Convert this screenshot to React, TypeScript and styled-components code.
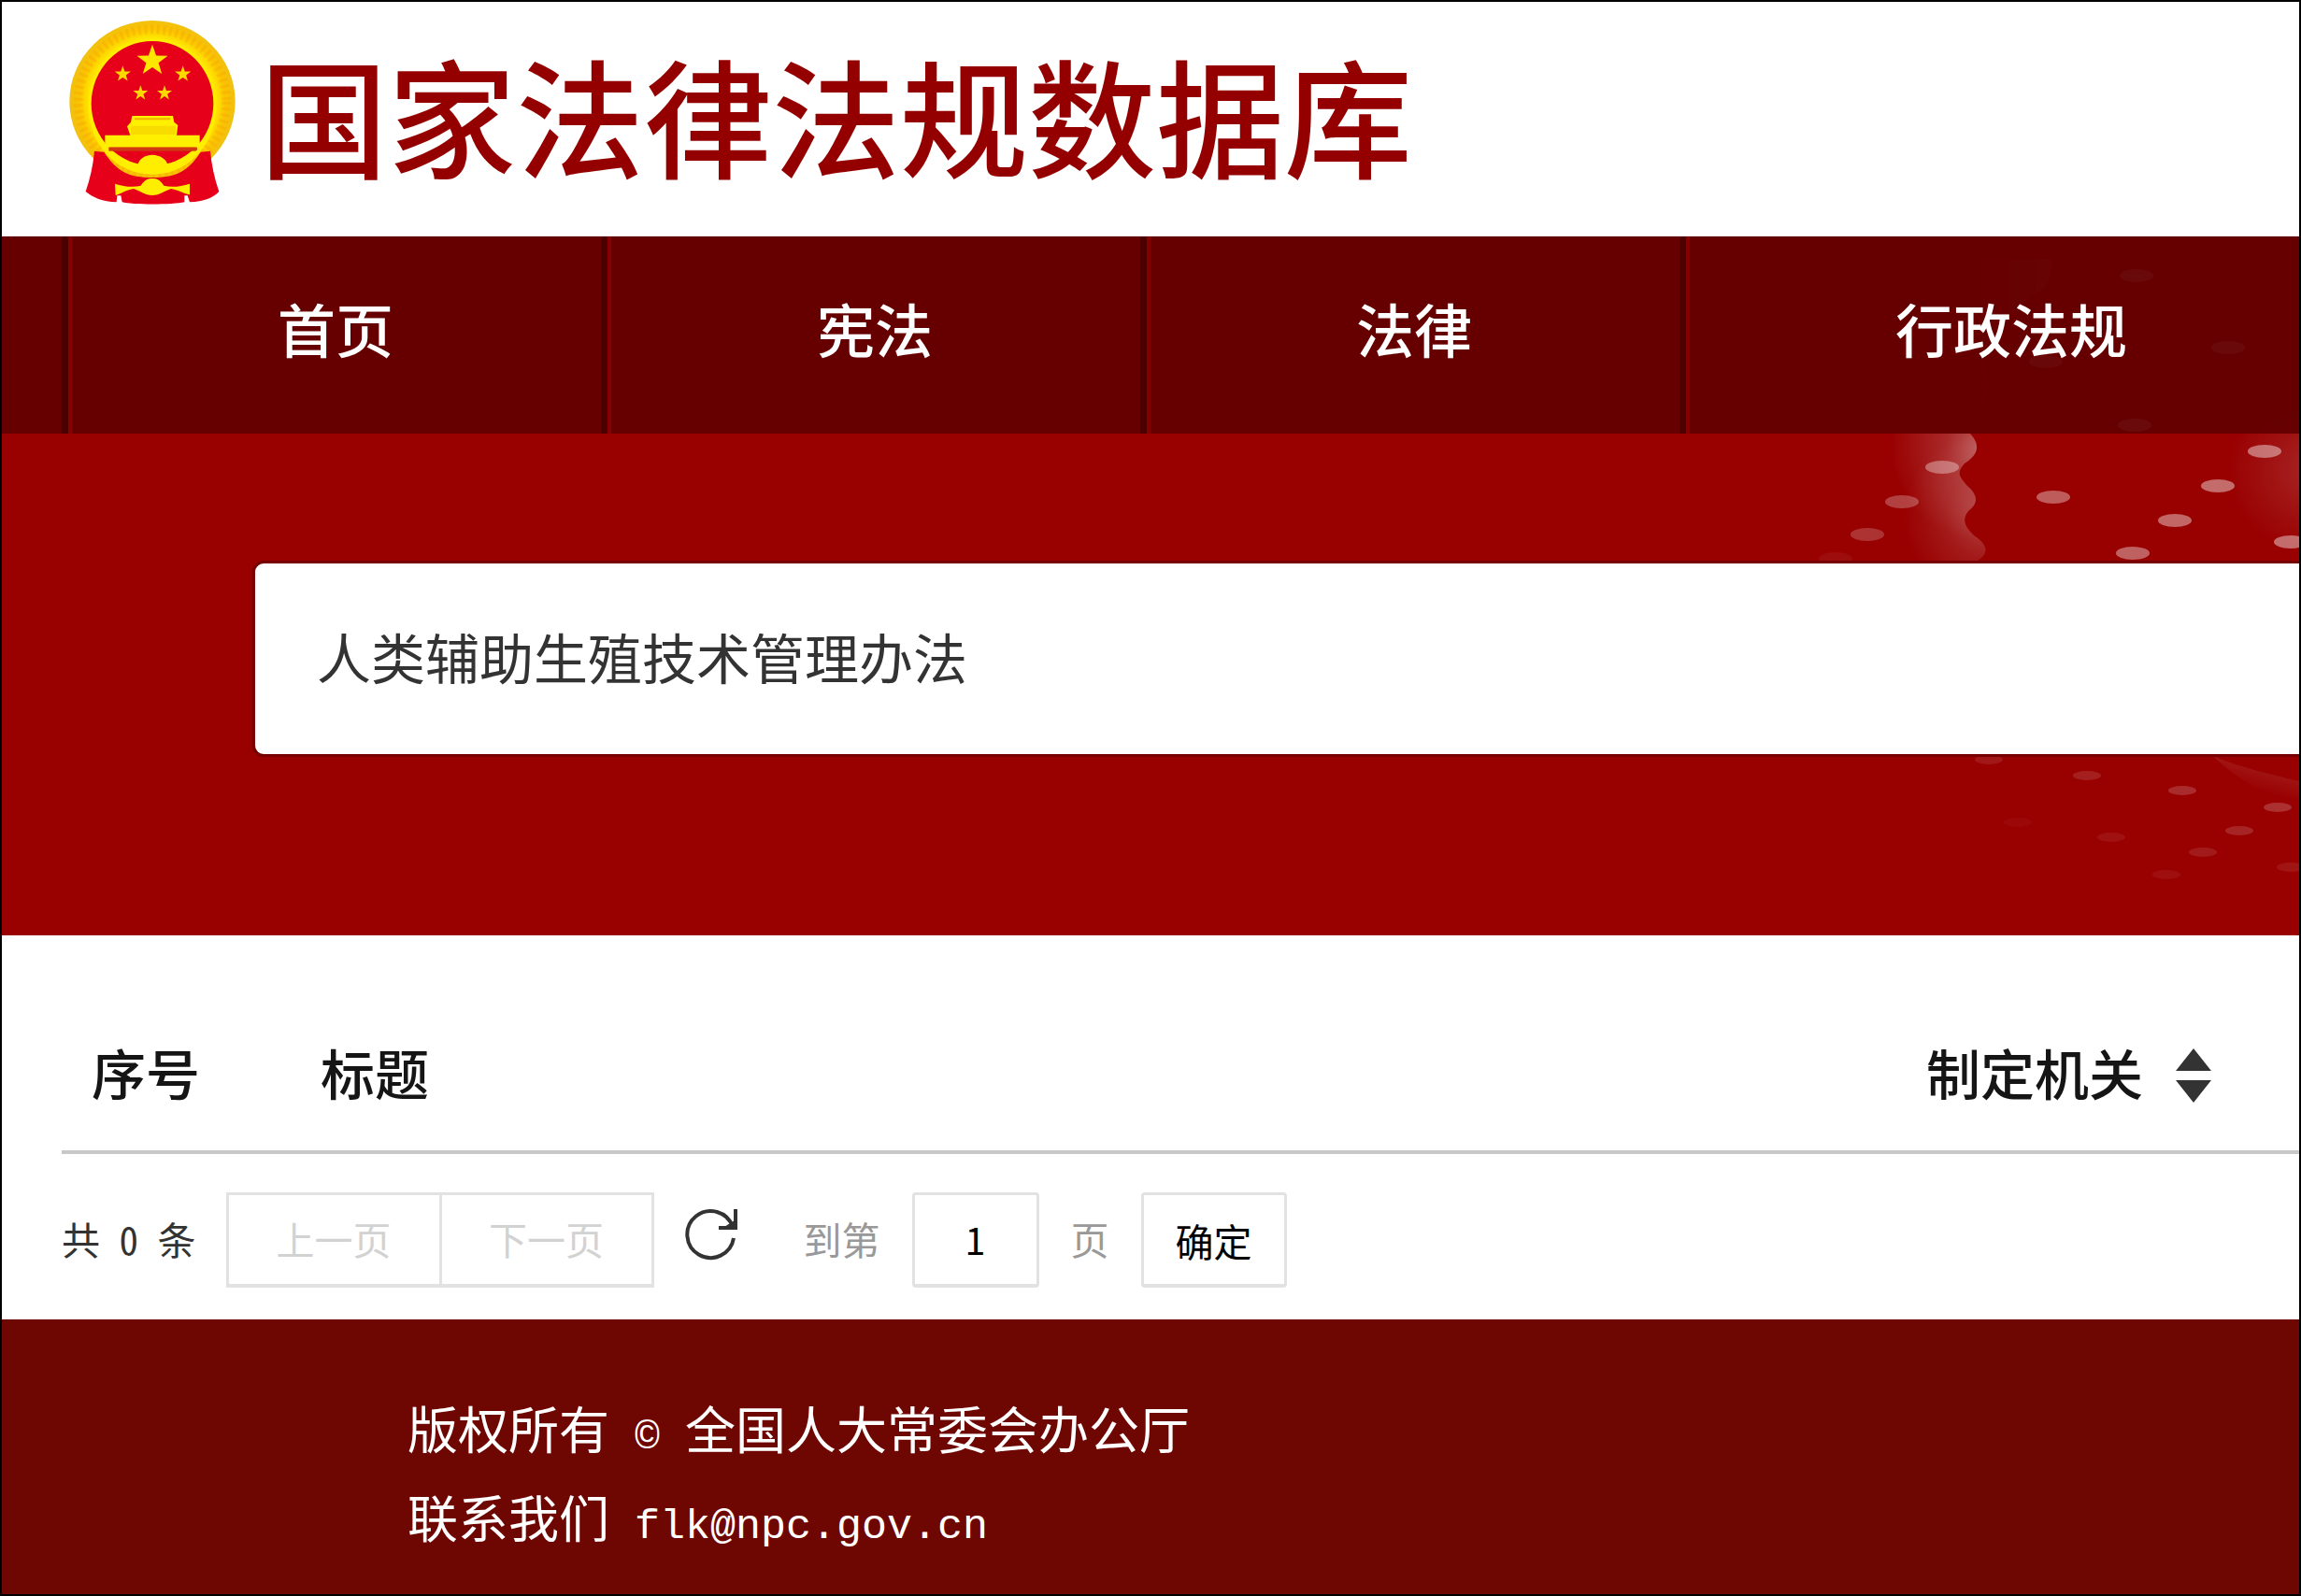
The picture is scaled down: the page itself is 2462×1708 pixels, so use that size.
import React, { useState } from "react";
import styled, { createGlobalStyle } from "styled-components";

const sans = `"Noto Sans CJK SC", "Liberation Sans", sans-serif`;
const mono = `"Noto Sans Mono CJK SC", "Noto Sans CJK SC", monospace`;

const GlobalStyle = createGlobalStyle`
  *, *::before, *::after { box-sizing: border-box; }
  body { margin: 0; background: #fff; font-family: ${sans}; color: #333; }
  button, input { font: inherit; margin: 0; }
  a { color: inherit; text-decoration: none; }
`;

const Page = styled.div`
  border: 2px solid #000;
  overflow: hidden;
`;

const Header = styled.header`
  display: flex;
  align-items: center;
  gap: 26px;
  padding: 20px 0 34px 72px;
  background: #fff;
`;

const EmblemSvg = styled.svg`
  flex: none;
  width: 178px;
  height: 197px;
`;

const SiteName = styled.h1`
  margin: 0;
  font-size: 137px;
  line-height: 160px;
  font-weight: 500;
  color: #940000;
  white-space: nowrap;
`;

const Hero = styled.div`
  position: relative;
  background: #990000;
`;

const HeroArt = styled.svg`
  position: absolute;
  top: 0;
  right: 0;
  width: 698px;
  height: 748px;
`;

const Nav = styled.nav`
  position: relative;
  display: flex;
  padding-left: 64px;
  background: rgba(96, 0, 0, 0.9);
`;

const NavLink = styled.a`
  display: flex;
  flex: none;
  align-items: center;
  height: 211px;
  padding: 0 222px 16px 224px;
  border-left: 7px solid #4d0000;
  box-shadow: inset 4px 0 #850000;
  font-size: 62px;
  line-height: 80px;
  font-weight: 500;
  color: #fff;
  white-space: nowrap;
`;

const SearchBar = styled.form`
  position: relative;
  display: flex;
  padding: 136px 0 191px 268px;
`;

const SearchInput = styled.input`
  flex: 1;
  min-width: 0;
  height: 210px;
  padding: 0 66px 6px;
  border: 3px solid #760000;
  border-right: 0;
  border-radius: 12px 0 0 12px;
  background: #fff;
  color: #333;
  font-size: 58px;
  outline: none;
`;

const Results = styled.main`
  padding: 68px 0 34px 64px;
  background: #fff;
`;

const Table = styled.table`
  width: 100%;
  table-layout: fixed;
  border-collapse: collapse;
`;

const Th = styled.th<{ $width?: number }>`
  width: ${(p) => (p.$width ? `${p.$width}px` : "auto")};
  padding: 38px 0 44px 32px;
  border-bottom: 4px solid #c8c8c8;
  font-size: 58px;
  line-height: 80px;
  font-weight: 500;
  color: #151515;
  text-align: left;
  white-space: nowrap;
`;

const SortButton = styled.button`
  display: flex;
  align-items: center;
  gap: 35px;
  padding: 0;
  border: 0;
  background: none;
  color: inherit;
  line-height: 80px;
`;

const SortSvg = styled.svg`
  margin-top: 8px;
`;

const Pager = styled.div`
  display: flex;
  align-items: center;
  gap: 32px;
  padding-top: 41px;
  font-size: 41px;
  line-height: 60px;
  white-space: nowrap;
`;

const Total = styled.span`
  padding-bottom: 4px;
  font-family: ${mono};
`;

const StepGroup = styled.div`
  display: flex;
`;

const StepButton = styled.button`
  width: 231px;
  height: 102px;
  padding: 0 0 4px;
  border: 3px solid #e2e2e2;
  border-bottom-width: 4px;
  background: #fff;
  color: #d2d2d2;

  & + & {
    width: 230px;
    margin-left: -3px;
  }
`;

const RefreshButton = styled.button`
  display: flex;
  padding: 0 0 12px;
  margin-right: 38px;
  border: 0;
  background: none;
`;

const JumpForm = styled.form`
  display: flex;
  align-items: center;
  gap: 34px;
  color: #999;
`;

const JumpLabel = styled.label`
  padding-bottom: 4px;
`;

const PageInput = styled.input`
  width: 136px;
  height: 102px;
  padding: 0 0 4px;
  border: 3px solid #e2e2e2;
  border-bottom-width: 4px;
  border-radius: 4px;
  background: #fff;
  color: #000;
  font-family: ${mono};
  text-align: center;
`;

const ConfirmButton = styled.button`
  width: 156px;
  height: 102px;
  padding: 0;
  border: 3px solid #e2e2e2;
  border-bottom-width: 4px;
  border-radius: 4px;
  background: #fff;
  color: #000;
`;

const Footer = styled.footer`
  padding: 68px 0 36px 434px;
  background: #6e0602;
  color: #fff;
  font-family: ${mono};
  font-size: 54px;
  font-weight: 300;
  line-height: 95px;
`;

const FooterLine = styled.p`
  height: 95px;
  margin: 0;
  white-space: pre;
`;

const Latin = styled.span`
  font-family: "Liberation Mono", monospace;
  font-size: 45px;
`;

function star(cx: number, cy: number, r: number) {
  return Array.from({ length: 10 }, (_, i) => {
    const radius = i % 2 ? r * 0.4 : r;
    const a = -Math.PI / 2 + (i * Math.PI) / 5;
    return `${(cx + radius * Math.cos(a)).toFixed(1)},${(cy + radius * Math.sin(a)).toFixed(1)}`;
  }).join(" ");
}

function Emblem() {
  return (
    <EmblemSvg viewBox="38 36 534 591" role="img" aria-label="国徽">
      <defs>
        <radialGradient id="wreath" gradientUnits="userSpaceOnUse" cx="305" cy="296" r="266">
          <stop offset="0.76" stopColor="#ffe800" />
          <stop offset="0.88" stopColor="#fbc400" />
          <stop offset="1" stopColor="#f0c012" />
        </radialGradient>
      </defs>
      <ellipse cx="305" cy="296" rx="266" ry="260" fill="url(#wreath)" />
      <ellipse cx="305" cy="296" rx="238" ry="232" fill="none" stroke="#f5a000" strokeWidth="30" strokeDasharray="9 11" opacity="0.35" />
      <path d="M119 455 L150 458 C190 520 230 540 305 540 C380 540 420 520 460 458 L491 455 C495 500 505 545 519 585 C500 605 470 618 425 619 L418 598 L408 598 L408 619 C370 628 240 628 208 619 L204 598 L192 598 L190 619 C145 617 115 605 91 585 C105 545 115 500 119 455 Z" fill="#e60019" />
      <ellipse cx="305" cy="312" rx="205" ry="218" fill="#ffee00" />
      <ellipse cx="305" cy="302" rx="196" ry="200" fill="#e60019" />
      <polygon points={star(305, 165, 52)} fill="#ffe600" />
      <polygon points={star(210, 208, 27)} fill="#ffd800" />
      <polygon points={star(403, 208, 27)} fill="#ffd800" />
      <polygon points={star(267, 269, 25)} fill="#ffd800" />
      <polygon points={star(344, 269, 25)} fill="#ffd800" />
      <path d="M240 342 H371 L375 362 L387 372 L383 404 H457 V443 H153 V404 H234 L224 376 L236 362 Z" fill="#fff000" />
      <path d="M248 352 H363" stroke="#f0b000" strokeWidth="6" fill="none" />
      <path d="M234 374 H380 V402 H238 Z" fill="#f8dc00" />
      <rect x="165" y="443" width="284" height="12" fill="#cf3a10" />
      <path d="M140 430 C170 500 240 528 305 520 C370 528 440 500 470 430 L440 460 C410 492 380 502 355 500 C350 480 330 468 305 467 C280 468 262 480 258 500 C230 502 195 490 165 455 Z" fill="#ffee00" />
      <path d="M185 560 C215 570 245 572 268 566 C280 548 290 543 305 543 C320 543 330 548 342 566 C365 572 395 570 425 560 V595 C405 592 385 578 365 576 C345 582 330 597 305 597 C280 597 265 582 245 576 C225 578 205 592 187 597 Z" fill="#ffee00" />
    </EmblemSvg>
  );
}

const brightDots: [number, number, number][] = [
  [316, 247, 0.34], [273, 284, 0.25], [236, 319, 0.2], [435, 279, 0.36],
  [661, 230, 0.42], [611, 267, 0.42], [565, 304, 0.4], [520, 339, 0.38],
  [689, 327, 0.42], [202, 345, 0.05], [524, 42, 0.36], [622, 119, 0.36],
  [427, 134, 0.32], [522, 202, 0.4],
];

const dimDots: [number, number, number][] = [
  [366, 560, 0.09], [471, 577, 0.12], [573, 593, 0.17], [675, 611, 0.19],
  [634, 636, 0.14], [595, 659, 0.1], [556, 683, 0.06], [397, 627, 0.03],
  [497, 643, 0.07], [689, 675, 0.08],
];

function BannerArt() {
  return (
    <HeroArt viewBox="0 0 698 748" aria-hidden="true">
      <defs>
        <linearGradient id="nearFold" gradientUnits="userSpaceOnUse" x1="330" y1="0" x2="434" y2="0">
          <stop offset="0" stopColor="#fff" stopOpacity="0" />
          <stop offset="1" stopColor="#fff" stopOpacity="0.14" />
        </linearGradient>
        <radialGradient id="foldTop" gradientUnits="userSpaceOnUse" cx="360" cy="225" r="100">
          <stop offset="0" stopColor="#fff" stopOpacity="0.38" />
          <stop offset="0.4" stopColor="#fff" stopOpacity="0.16" />
          <stop offset="1" stopColor="#fff" stopOpacity="0" />
        </radialGradient>
        <radialGradient id="foldBottom" gradientUnits="userSpaceOnUse" cx="364" cy="300" r="90">
          <stop offset="0" stopColor="#fff" stopOpacity="0.26" />
          <stop offset="0.5" stopColor="#fff" stopOpacity="0.1" />
          <stop offset="1" stopColor="#fff" stopOpacity="0" />
        </radialGradient>
        <radialGradient id="edge" gradientUnits="userSpaceOnUse" cx="710" cy="250" r="90">
          <stop offset="0" stopColor="#fff" stopOpacity="0.14" />
          <stop offset="1" stopColor="#fff" stopOpacity="0" />
        </radialGradient>
        <linearGradient id="ridge" gradientUnits="userSpaceOnUse" x1="665" y1="573" x2="659" y2="596">
          <stop offset="0" stopColor="#fff" stopOpacity="0.08" />
          <stop offset="1" stopColor="#fff" stopOpacity="0" />
        </linearGradient>
      </defs>
      <path d="M434 24 C434 40 430 52 423 57 C412 66 400 68 392 80 C378 100 362 110 361 130 C366 150 368 165 362 178 C350 190 340 198 346 211 H300 V24 Z" fill="url(#nearFold)" />
      <path d="M346 211 C358 224 354 234 340 243 C330 254 336 258 342 266 C356 278 354 286 344 294 C336 304 342 312 350 320 C368 332 364 340 354 347 H230 V211 Z" fill="url(#foldTop)" />
      <path d="M346 211 C358 224 354 234 340 243 C330 254 336 258 342 266 C356 278 354 286 344 294 C336 304 342 312 350 320 C368 332 364 340 354 347 H230 V211 Z" fill="url(#foldBottom)" />
      <rect x="600" y="150" width="98" height="197" fill="url(#edge)" />
      <path d="M606 556 C640 570 670 576 698 583 V606 C660 598 630 580 606 556 Z" fill="url(#ridge)" />
      {brightDots.map(([x, y, o]) => (
        <ellipse key={`${x}-${y}`} cx={x} cy={y} rx="18" ry="7" fill="#fff" fillOpacity={o} />
      ))}
      {dimDots.map(([x, y, o]) => (
        <ellipse key={`${x}-${y}`} cx={x} cy={y} rx="15" ry="5" fill="#fff" fillOpacity={o} />
      ))}
    </HeroArt>
  );
}

function RefreshIcon() {
  return (
    <svg width="58" height="58" viewBox="0 -4 58 58" fill="none" aria-hidden="true">
      <path d="M52 17 A25 25 0 1 0 53 29" stroke="#333" strokeWidth="4" />
      <path d="M55 -2 V18 H37" stroke="#333" strokeWidth="4" />
      <path d="M43 17 L54 10 V17 Z" fill="#333" />
    </svg>
  );
}

function SortIcon() {
  return (
    <SortSvg width="38" height="58" viewBox="0 0 38 58" fill="#333" aria-hidden="true">
      <path d="M19 0 L38 24 H0 Z M0 34 H38 L19 58 Z" />
    </SortSvg>
  );
}

const navItems = ["首页", "宪法", "法律", "行政法规"];

export default function App() {
  const [query, setQuery] = useState("人类辅助生殖技术管理办法");
  const [page, setPage] = useState("1");
  const stop = (e: React.FormEvent) => e.preventDefault();

  return (
    <Page>
      <GlobalStyle />
      <Header>
        <Emblem />
        <SiteName>国家法律法规数据库</SiteName>
      </Header>
      <Hero>
        <BannerArt />
        <Nav>
          {navItems.map((item) => (
            <NavLink key={item} href="#">{item}</NavLink>
          ))}
        </Nav>
        <SearchBar onSubmit={stop}>
          <SearchInput
            type="text"
            aria-label="搜索"
            value={query}
            onChange={(e) => setQuery(e.target.value)}
          />
        </SearchBar>
      </Hero>
      <Results>
        <Table>
          <thead>
            <tr>
              <Th $width={245} scope="col">序号</Th>
              <Th scope="col">标题</Th>
              <Th $width={431} scope="col">
                <SortButton type="button">制定机关<SortIcon /></SortButton>
              </Th>
            </tr>
          </thead>
        </Table>
        <Pager>
          <Total>共 0 条</Total>
          <StepGroup>
            <StepButton type="button">上一页</StepButton>
            <StepButton type="button">下一页</StepButton>
          </StepGroup>
          <RefreshButton type="button" aria-label="刷新"><RefreshIcon /></RefreshButton>
          <JumpForm onSubmit={stop}>
            <JumpLabel htmlFor="page">到第</JumpLabel>
            <PageInput id="page" type="text" value={page} onChange={(e) => setPage(e.target.value)} />
            <JumpLabel htmlFor="page">页</JumpLabel>
            <ConfirmButton type="submit">确定</ConfirmButton>
          </JumpForm>
        </Pager>
      </Results>
      <Footer>
        <FooterLine>版权所有 <Latin>©</Latin> 全国人大常委会办公厅</FooterLine>
        <FooterLine>联系我们 <Latin as="a" href="mailto:flk@npc.gov.cn">flk@npc.gov.cn</Latin></FooterLine>
      </Footer>
    </Page>
  );
}
